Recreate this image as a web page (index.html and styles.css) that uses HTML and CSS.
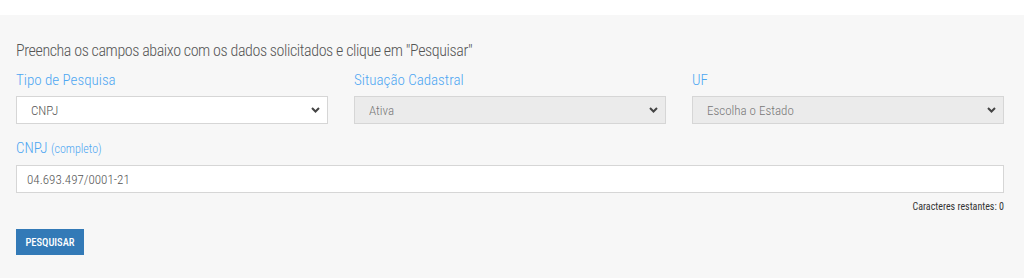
FILE: index.html
```html
<!DOCTYPE html>
<html lang="pt-BR">
<head>
  <meta charset="UTF-8" />
  <meta name="viewport" content="width=device-width, initial-scale=1.0"/>
  <title>Consulta CNPJ</title>
  <link rel="stylesheet" href="styles.css">
</head>
<body>
  <div class="top-strip"></div>

  <main class="search-panel">
    <form class="search-form" onsubmit="return false">
      <p class="intro">Preencha os campos abaixo com os dados solicitados e clique em "Pesquisar"</p>

      <div class="form-row">
        <div class="form-group">
          <label for="tipo">Tipo de Pesquisa</label>
          <select id="tipo" class="field">
            <option>CNPJ</option>
            <option>Razão Social</option>
          </select>
        </div>
        <div class="form-group">
          <label for="situacao">Situação Cadastral</label>
          <select id="situacao" class="field" disabled>
            <option>Ativa</option>
          </select>
        </div>
        <div class="form-group">
          <label for="uf">UF</label>
          <select id="uf" class="field" disabled>
            <option>Escolha o Estado</option>
          </select>
        </div>
      </div>

      <div class="form-group">
        <label for="cnpj">CNPJ <small>(completo)</small></label>
        <input type="text" id="cnpj" class="field field-text" value="04.693.497/0001-21" maxlength="18" />
        <span class="counter">Caracteres restantes: 0</span>
      </div>

      <button type="submit" class="search-button">Pesquisar</button>
    </form>
  </main>
</body>
</html>
```

FILE: styles.css
```css
* {
  margin: 0;
  padding: 0;
  box-sizing: border-box;
  font-family: Roboto, "Liberation Sans Narrow", sans-serif;
  font-stretch: 75%;
}

body {
  background-color: #ffffff;
  color: #555;
}

.top-strip {
  height: 15px;
  background-color: #ffffff;
}

.search-panel {
  background-color: #f7f7f7;
  min-height: 263px;
  padding: 27px 20px 20px 16px;
}

.intro {
  font-size: 16px;
  font-weight: 300;
  line-height: 18px;
  letter-spacing: -0.4px;
  color: #555;
  margin-bottom: 12px;
}

.form-row {
  display: flex;
  gap: 26px;
}

.form-row .form-group {
  flex: 1;
}

.form-group {
  margin-bottom: 16px;
}

label {
  display: block;
  font-size: 15px;
  font-weight: 300;
  line-height: 17px;
  color: #4da6f2;
  margin-bottom: 7px;
}

label small {
  font-size: 12px;
}

.field {
  display: block;
  width: 100%;
  height: 28px;
  padding: 0 20px 0 14px;
  font-size: 13px;
  font-weight: 300;
  color: #555;
  background-color: #fff;
  border: 1px solid #d6d6d6;
  border-radius: 0;
  outline: none;
}

.field-text {
  padding: 0 10px;
}

select.field {
  appearance: none;
  -webkit-appearance: none;
  background-image: url("data:image/svg+xml;utf8,<svg xmlns='http://www.w3.org/2000/svg' width='9' height='6' viewBox='0 0 9 6'><path d='M1 1l3.5 3.5L8 1' fill='none' stroke='%23444' stroke-width='2'/></svg>");
  background-repeat: no-repeat;
  background-position: right 7px center;
}

select.field:disabled {
  background-color: #ebebeb;
  color: #777;
  opacity: 1;
}

.counter {
  display: block;
  text-align: right;
  font-size: 10px;
  line-height: 12px;
  color: #333;
  margin-top: 8px;
}

.search-button {
  display: block;
  width: 68px;
  height: 26px;
  margin-top: 5px;
  background-color: #337ab7;
  color: #fff;
  border: none;
  border-radius: 0;
  font-size: 10.5px;
  font-weight: 500;
  text-transform: uppercase;
  cursor: pointer;
}
```
